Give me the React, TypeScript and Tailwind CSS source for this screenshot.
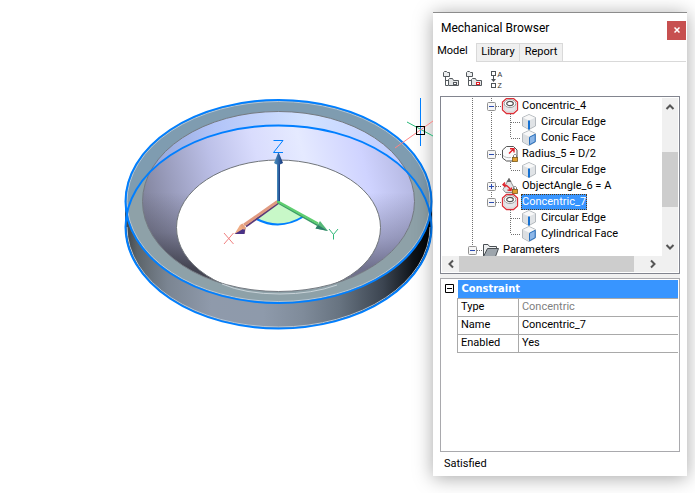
import React from "react";

type Guide = "line" | "none" | "tee" | "elbow" | "minus" | "minusEnd" | "plus";
type IconName = "ring" | "edge" | "face" | "radius" | "angle" | "folder";
type Row = { guides: Guide[]; icon: IconName; label: string; selected?: boolean };

const rows: Row[] = [
  { guides: ["line", "minus"], icon: "ring", label: "Concentric_4" },
  { guides: ["line", "line", "tee"], icon: "edge", label: "Circular Edge" },
  { guides: ["line", "line", "elbow"], icon: "face", label: "Conic Face" },
  { guides: ["line", "minus"], icon: "radius", label: "Radius_5 = D/2" },
  { guides: ["line", "line", "elbow"], icon: "edge", label: "Circular Edge" },
  { guides: ["line", "plus"], icon: "angle", label: "ObjectAngle_6 = A" },
  { guides: ["line", "minusEnd"], icon: "ring", label: "Concentric_7", selected: true },
  { guides: ["line", "none", "tee"], icon: "edge", label: "Circular Edge" },
  { guides: ["line", "none", "elbow"], icon: "face", label: "Cylindrical Face" },
  { guides: ["minusEnd"], icon: "folder", label: "Parameters" },
];

const properties = [
  { name: "Type", value: "Concentric", dim: true },
  { name: "Name", value: "Concentric_7" },
  { name: "Enabled", value: "Yes" },
];

function GuideCell({ kind }: { kind: Guide }) {
  const box = kind === "minus" || kind === "minusEnd" || kind === "plus";
  const drawing = (
    <svg width="19" height="16" viewBox="0 0 19 16" className="block" aria-hidden="true">
      <g stroke="#707070" strokeDasharray="1 1">
        {kind !== "none" && (
          <path d={kind === "elbow" || kind === "minusEnd" ? "M9.5 0V8" : "M9.5 0V16"} />
        )}
        {kind !== "none" && kind !== "line" && <path d="M10 8.5H19" />}
      </g>
      {box && (
        <>
          <rect x="5.5" y="4.5" width="8" height="8" rx="1" fill="#f6f6f6" stroke="#919191" />
          <path d="M7 8.5H12" stroke="#2b4bb0" />
          {kind === "plus" && <path d="M9.5 6V11" stroke="#2b4bb0" />}
        </>
      )}
    </svg>
  );
  return box ? (
    <button type="button" aria-label={kind === "plus" ? "Expand" : "Collapse"} className="shrink-0">
      {drawing}
    </button>
  ) : (
    <span className="shrink-0">{drawing}</span>
  );
}

function Lock() {
  return (
    <>
      <path d="M11.5 11.5V9.5L12.5 8.500H13.500L14.5 9.500V11.5" fill="none" stroke="#777" />
      <rect x="10.5" y="11.500" width="5" height="4" fill="#e0a030" stroke="#7a5a18" strokeWidth=".8" />
    </>
  );
}

function TreeIcon({ name }: { name: IconName }) {
  return (
    <svg width="16" height="16" viewBox="0 0 16 16" className="ml-px block shrink-0 overflow-visible" aria-hidden="true">
      {name === "ring" && (
        <>
          <path d="M4.500 .5H11.500L15.500 4V12L11.500 15.500H4.500L.5 12V4Z" fill="#fff" stroke="#dc3038" strokeWidth="1.300" />
          <path d="M2 5.500V11.500L5 14H11L14 11.500V5.500Z" fill="#e6e6e8" stroke="#c9c9c9" strokeWidth=".6" />
          <ellipse cx="8" cy="5.500" rx="5.800" ry="4" fill="#fff" stroke="#8a8a8a" strokeWidth=".8" />
          <ellipse cx="8" cy="5.500" rx="3.300" ry="2.200" fill="#fff" stroke="#555" strokeWidth="1.200" />
        </>
      )}
      {(name === "edge" || name === "face") && (
        <>
          <path d="M8 .5 14.500 3.500V12L8 15.500 1.500 12V3.500Z" fill="#e0e3e6" stroke="#a5abb0" strokeWidth=".8" />
          <path d="M8 1 14 3.700 8 6.500 2 3.700Z" fill="#f8f8f8" />
          <path d="M2 4 8 7V15L2 11.800Z" fill="#dcdfe2" />
          {name === "edge" ? (
            <path d="M8 6.500V15.500" stroke="#1671d2" strokeWidth="2" />
          ) : (
            <path d="M8.500 7.200 14.200 4.300V11.700L8.500 14.800Z" fill="#8db7e8" stroke="#276fbd" />
          )}
        </>
      )}
      {name === "radius" && (
        <>
          <path d="M4.500 .5H11.500L15 4V12L11.500 15H4.500L.5 12V4Z" fill="#fbfbfb" stroke="#555" />
          <path d="M1 9.500C3 11.500 6 12 9 11.500" fill="none" stroke="#bbb" />
          <path d="M7 7.500 11.500 3M8 2.700H12V6.500" fill="none" stroke="#df242c" strokeWidth="1.400" />
          <Lock />
        </>
      )}
      {name === "angle" && (
        <>
          <path d="M7 .5 13 11.500 10 14.500H3.500L1 11.500Z" fill="#e2e3e5" stroke="#777" strokeWidth=".8" />
          <path d="M7 0 9.500 4H4.500Z" fill="#666" />
          <path d="M1.500 6.500C4 7 7 8.500 8.500 12M3 4.500 1 6.800 3.500 9M9.500 9.500 9 12.500 5.500 12" fill="none" stroke="#df242c" strokeWidth="1.400" />
          <Lock />
        </>
      )}
      {name === "folder" && (
        <>
          <path d="M.5 14V2.500H5L6.500 4.500H13.500V7" fill="#eceeef" stroke="#4a4f54" />
          <path d="M.5 14.500 4.500 6.500H15.500L12.500 14.500Z" fill="#9da5ac" stroke="#4a4f54" />
        </>
      )}
    </svg>
  );
}

function FilterIcon({ accent }: { accent: string }) {
  return (
    <svg width="16" height="16" viewBox="0 0 16 16" className="block" aria-hidden="true">
      <path d="M.5 5.500V1.500L1.500 .5H3.500L4.500 1.500H6.500V5.500Z" fill="#eceeef" stroke="#555a5e" />
      <path d="M2.500 6V14.500H5M2.500 9.500H6" fill="none" stroke="#555a5e" />
      <path d="M5.500 14.500V8.500L6.500 7.500H9.500L10.500 9.500H15.500V14.500Z" fill="#e3e5e6" stroke="#555a5e" />
      <rect x="10.500" y="11.500" width="3" height="2" fill="#fff" stroke={accent} />
    </svg>
  );
}

function SortIcon() {
  return (
    <svg width="13" height="17" viewBox="0 0 13 17" className="block" aria-hidden="true">
      <g fill="none" stroke="#4f5458">
        <rect x=".5" y=".5" width="4" height="4" />
        <rect x=".5" y="12.500" width="4" height="4" />
        <path d="M2.500 5V10" />
      </g>
      <path d="M0 8H5L2.500 11Z" fill="#4f5458" />
      <text x="6.500" y="6" fontSize="7" fontFamily="Liberation Sans, sans-serif" fill="#333">A</text>
      <text x="6.500" y="17" fontSize="7" fontFamily="Liberation Sans, sans-serif" fill="#333">Z</text>
    </svg>
  );
}

function Arrow({ d, label, className }: { d: string; label: string; className: string }) {
  return (
    <button type="button" aria-label={label} className={`flex shrink-0 items-center justify-center ${className}`}>
      <svg width="10" height="10" viewBox="0 0 10 10" aria-hidden="true">
        <path d={d} fill="none" stroke="#555" strokeWidth="2" />
      </svg>
    </button>
  );
}

function Drawing() {
  return (
    <svg width="434" height="340" viewBox="0 0 434 340" className="block shrink-0" role="img" aria-label="Conic ring with X, Y and Z axes">
      <defs>
        <linearGradient id="side" gradientUnits="userSpaceOnUse" x1="125" y1="0" x2="432" y2="0">
          <stop offset="0" stopColor="#3c4245" />
          <stop offset=".04" stopColor="#5c646a" />
          <stop offset=".14" stopColor="#7b8592" />
          <stop offset=".28" stopColor="#8f9aab" />
          <stop offset=".45" stopColor="#8e9aab" />
          <stop offset=".58" stopColor="#7f8b9a" />
          <stop offset=".7" stopColor="#677380" />
          <stop offset=".84" stopColor="#3c4551" />
          <stop offset=".94" stopColor="#0e1319" />
          <stop offset="1" stopColor="#000" />
        </linearGradient>
        <linearGradient id="cone" gradientUnits="userSpaceOnUse" x1="142" y1="230" x2="415" y2="160">
          <stop offset="0" stopColor="#7b7d94" />
          <stop offset=".14" stopColor="#9a9dbd" />
          <stop offset=".3" stopColor="#bcc0e8" />
          <stop offset=".46" stopColor="#d9dcfd" />
          <stop offset=".62" stopColor="#e5eaff" />
          <stop offset=".82" stopColor="#cfd3ff" />
          <stop offset="1" stopColor="#b0b3dc" />
        </linearGradient>
        <linearGradient id="coneTop" gradientUnits="userSpaceOnUse" x1="150" y1="0" x2="410" y2="0">
          <stop offset="0" stopColor="#93a5d8" />
          <stop offset=".25" stopColor="#b2c4f8" />
          <stop offset=".6" stopColor="#d2e2ff" />
          <stop offset="1" stopColor="#bdcaff" />
        </linearGradient>
        <linearGradient id="shade" x1="0" y1="0" x2="0" y2="1">
          <stop offset=".45" stopColor="#34343e" stopOpacity="0" />
          <stop offset=".67" stopColor="#34343e" stopOpacity=".3" />
          <stop offset=".87" stopColor="#34343e" stopOpacity=".85" />
        </linearGradient>
        <linearGradient id="shadeRight" x1="0" y1="0" x2="0" y2="1">
          <stop offset=".45" stopColor="#4c4c66" stopOpacity="0" />
          <stop offset=".7" stopColor="#4c4c66" stopOpacity=".4" />
          <stop offset=".87" stopColor="#4c4c66" stopOpacity=".75" />
        </linearGradient>
        <linearGradient id="blueShaft">
          <stop offset="0" stopColor="#4c91bd" />
          <stop offset=".5" stopColor="#3066a5" />
          <stop offset="1" stopColor="#173579" />
        </linearGradient>
        <clipPath id="innerRim"><ellipse cx="278.500" cy="201.500" rx="136" ry="90" /></clipPath>
        <clipPath id="topRim"><ellipse cx="278.500" cy="201.500" rx="153.500" ry="101.500" /></clipPath>
      </defs>

      <path d="M125 201.500V227A153.500 101.500 0 0 0 432 227V201.500Z" fill="url(#side)" />
      <ellipse cx="278.500" cy="201.500" rx="153.500" ry="101.500" fill="#7f9cb0" />
      <ellipse cx="278.500" cy="227" rx="153.500" ry="101.500" fill="#8ea1a8" clipPath="url(#topRim)" />
      <g clipPath="url(#innerRim)">
        <rect x="142" y="111" width="273" height="181" fill="url(#coneTop)" />
        <ellipse cx="278.500" cy="227" rx="153.500" ry="101.500" fill="url(#cone)" />
        <rect x="142" y="111" width="137" height="181" fill="url(#shade)" />
        <rect x="279" y="111" width="137" height="181" fill="url(#shadeRight)" />
        <ellipse cx="278.500" cy="227.500" rx="102" ry="67.500" fill="#fff" stroke="#70757a" />
      </g>
      <ellipse cx="278.500" cy="201.500" rx="136" ry="90" fill="none" stroke="#747a80" />
      <path d="M222 284Q245 294 280 294Q312 294 337 285" fill="none" stroke="#c8d2d8" />
      <g fill="none" stroke="#b7c7d6">
        <ellipse cx="278.500" cy="201.500" rx="151.500" ry="100" />
        <path d="M127 227A151.500 100 0 0 0 430 227" />
      </g>
      <g fill="none" stroke="#007fff" strokeWidth="2">
        <ellipse cx="278.500" cy="201.500" rx="153" ry="101.500" />
        <ellipse cx="278.500" cy="227" rx="153" ry="101.500" />
      </g>

      <path d="M278 202 303.500 216.500Q280 231 256.500 219Z" fill="#c8f8c8" />
      <path d="M256.500 219Q280 231 303.500 216.500" fill="none" stroke="#007fff" strokeWidth="2" />
      <path d="M278.500 203 246 226.500" stroke="#5a3a78" strokeWidth="2" />
      <path d="M277.500 201.500 244 225" stroke="#e09a80" strokeWidth="3" />
      <path d="M234.500 234 240 225 245.500 227.500 245 233.500Z" fill="#efac84" />
      <path d="M234.500 234 245.500 227.500 244.500 234Z" fill="#493287" />
      <path d="M240 225 242.500 223.500 246 228 244 230Z" fill="#e6a27d" />
      <path d="M278.500 203 318 225.500" stroke="#3a9a68" strokeWidth="2" />
      <path d="M278 201.500 318 223.500" stroke="#5fce70" strokeWidth="2" />
      <path d="M328 231 315.500 228.500 320 221Z" fill="#55b878" />
      <path d="M328 231 315.500 228.500 318 225Z" fill="#2e7d6a" />
      <rect x="277" y="160" width="3" height="42" fill="url(#blueShaft)" />
      <path d="M278.500 152 283 163Q278 166 274 163Z" fill="url(#blueShaft)" />
      <rect x="277" y="201" width="3" height="2" fill="#55ca68" />

      <path d="M273.500 140.500H283L273.500 152.500H283" fill="none" stroke="#007fff" />
      <path d="M224 233 233.500 244M233.500 233 224 244" stroke="#f08080" />
      <path d="M329 229 333.500 234.500V239.500M338 229 333.500 234.500" fill="none" stroke="#2fb878" />
    </svg>
  );
}

function Cursor() {
  return (
    <svg width="38" height="52" viewBox="0 0 38 52" className="absolute top-[97px] left-[395px]" aria-hidden="true">
      <path d="M25.500 1V49" stroke="#007fff" />
      <path d="M12 25 38 39" stroke="#26b877" />
      <path d="M0 51 38 24" stroke="#ff8585" />
      <rect x="21.500" y="29.500" width="8" height="8" fill="none" stroke="#000" />
    </svg>
  );
}

function Browser() {
  return (
    <aside className="relative mt-3 mr-2 w-[254px] shrink-0 self-start border-t border-[#8c8c8c] bg-white shadow-[0_2px_18px_rgba(0,0,0,0.35)]">
      <header className="flex h-[30px] items-center justify-between pr-px pl-2">
        <h1 className="text-[12px]">Mechanical Browser</h1>
        <button type="button" aria-label="Close" className="mt-1 flex h-[19px] w-[19px] items-center justify-center bg-[#c75050]">
          <svg width="6" height="6" viewBox="0 0 6 6" aria-hidden="true">
            <path d="M.5 .5 5.500 5.500M5.500 .5 .5 5.500" stroke="#fff" strokeWidth="1.500" />
          </svg>
        </button>
      </header>

      <div role="tablist" className="flex h-[19px] items-stretch pr-px">
        <button type="button" role="tab" aria-selected="true" className="w-[43px] pr-1 pb-1">Model</button>
        <button type="button" role="tab" aria-selected="false" className="w-[44px] border border-[#d9d9d9] bg-[#f0f0f0]">Library</button>
        <button type="button" role="tab" aria-selected="false" className="w-[43px] border border-l-0 border-[#d9d9d9] bg-[#f0f0f0]">Report</button>
        <span className="flex-1 border-b border-[#d9d9d9]" />
      </div>

      <div role="toolbar" aria-label="Model tools" className="flex h-[34px] items-center gap-[7px] pl-[10px]">
        <button type="button" aria-label="Show all"><FilterIcon accent="#555a5e" /></button>
        <button type="button" aria-label="Show errors"><FilterIcon accent="#df1c24" /></button>
        <button type="button" aria-label="Sort by name" className="ml-0.5"><SortIcon /></button>
      </div>

      <div className="bg-[#f0f0f0] pr-[7px] pl-[7px] shadow-[inset_7px_0_#fff,inset_-7px_0_#fff]">
        <div className="border border-[#82858f] bg-white p-px">
          <div className="flex h-[158px]">
            <ul role="tree" aria-label="Model" className="min-w-0 flex-1 overflow-hidden pl-[21px]">
              {rows.map((row, i) => (
                <li key={i} role="treeitem" aria-selected={!!row.selected} className="flex h-4 items-center">
                  {row.guides.map((g, j) => <GuideCell key={j} kind={g} />)}
                  <TreeIcon name={row.icon} />
                  <span
                    className={
                      row.selected
                        ? "ml-[3px] h-4 bg-[#3895ff] px-px leading-4 whitespace-nowrap text-white outline outline-1 -outline-offset-1 outline-dotted outline-[#5a3a10]"
                        : "ml-[3px] h-4 px-px leading-4 whitespace-nowrap"
                    }
                  >
                    {row.label}
                  </span>
                </li>
              ))}
            </ul>
            <div className="flex w-4 shrink-0 flex-col bg-[#f0f0f0]">
              <Arrow label="Scroll up" d="M1.500 7 5 3.500 8.500 7" className="h-[18px]" />
              <div className="mt-9 h-[55px] bg-[#cdcdcd]" />
              <div className="flex-1" />
              <Arrow label="Scroll down" d="M1.500 3 5 6.500 8.500 3" className="h-[18px]" />
            </div>
          </div>
          <div className="flex h-4 bg-[#f0f0f0] pr-4">
            <Arrow label="Scroll left" d="M7 1.500 3.500 5 7 8.500" className="w-[17px]" />
            <div className="w-[175px] bg-[#cdcdcd]" />
            <div className="flex-1" />
            <Arrow label="Scroll right" d="M3 1.500 6.500 5 3 8.500" className="w-[18px]" />
          </div>
        </div>

        <div className="mt-1 flex h-[174px] items-start border border-[#a9a9ad] bg-white py-px pr-px">
          <button type="button" aria-label="Collapse Constraint" className="w-4 shrink-0 pt-1 pl-1">
            <svg width="9" height="9" viewBox="0 0 9 9" className="block" aria-hidden="true">
              <path d="M.5 .5H8.500V8.500H.5ZM2 4.500H7" fill="none" stroke="#000" />
            </svg>
          </button>
          <table className="flex-1 table-fixed border-collapse text-left">
            <colgroup><col className="w-[61px]" /><col className="w-[160px]" /></colgroup>
            <thead>
              <tr className="h-[18px]">
                <th colSpan={2} className="bg-[#3895ff] p-0 pl-1 font-['DejaVu_Sans_Condensed','DejaVu_Sans',sans-serif] leading-4 font-bold text-white">Constraint</th>
              </tr>
            </thead>
            <tbody>
              {properties.map((p) => (
                <tr key={p.name} className="h-[18px]">
                  <th scope="row" className="border border-[#a9a9a9] p-0 pl-[3px] leading-4 font-normal">{p.name}</th>
                  <td className={p.dim ? "border-y border-[#a9a9a9] p-0 pl-[3px] leading-4 text-[#808080]" : "border-y border-[#a9a9a9] p-0 pl-[3px] leading-4"}>{p.value}</td>
                </tr>
              ))}
            </tbody>
          </table>
        </div>
      </div>
      <footer className="flex h-6 items-center pl-[11px]">Satisfied</footer>
    </aside>
  );
}

export default function App() {
  return (
    <main className="relative flex min-h-screen overflow-hidden bg-white font-[Roboto,'Noto_Sans',sans-serif] text-[11px] text-black">
      <section aria-label="Drawing" className="min-w-0 flex-1">
        <Drawing />
      </section>
      <Browser />
      <Cursor />
    </main>
  );
}
